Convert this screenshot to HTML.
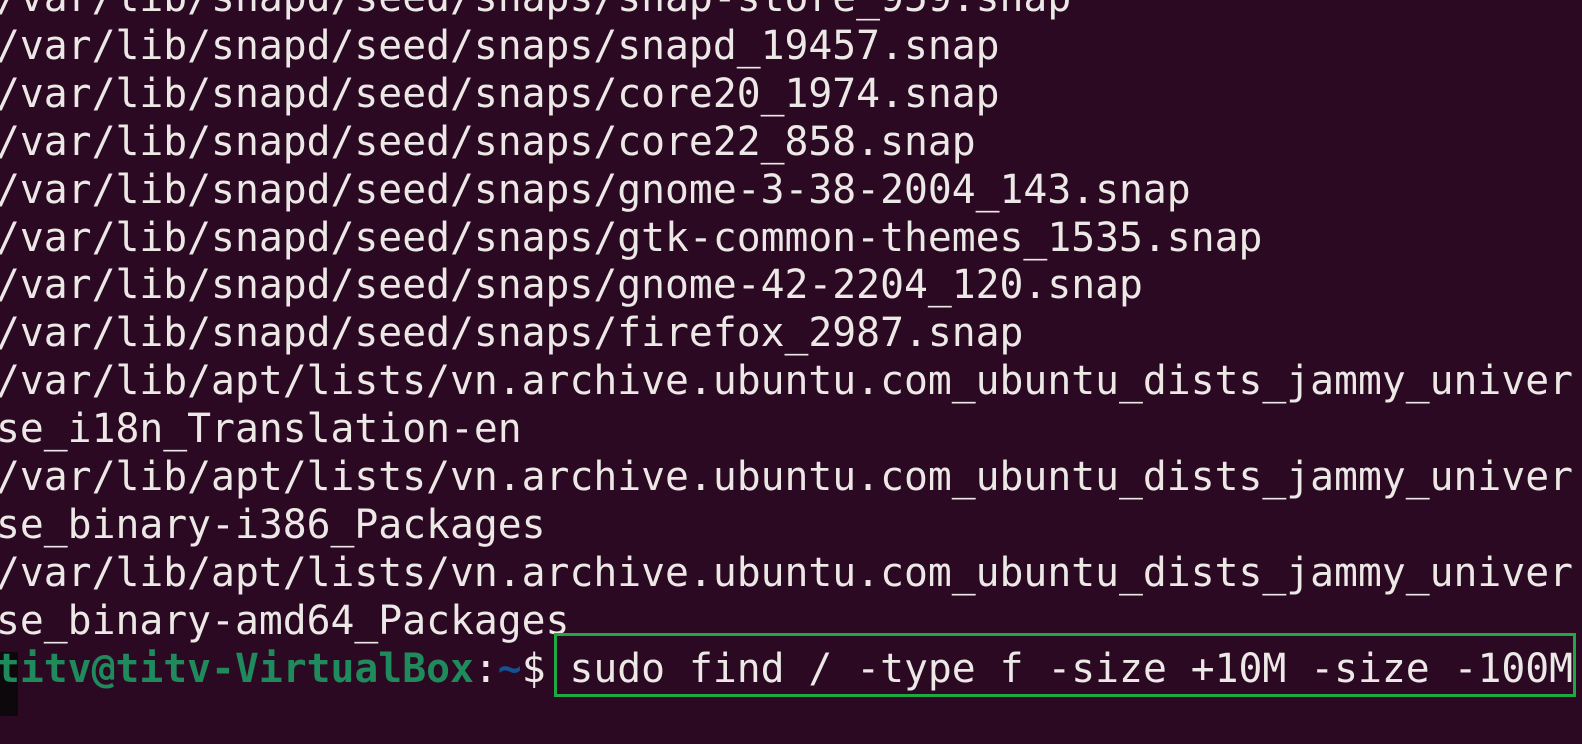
<!DOCTYPE html>
<html><head><meta charset="utf-8"><style>
html,body{margin:0;padding:0;width:1582px;height:744px;overflow:hidden;background:#2c0922;}
pre{position:absolute;left:-4px;top:-25px;margin:0;font-family:"DejaVu Sans Mono","Liberation Mono",monospace;font-size:39.7px;line-height:47.9px;color:#ebe8e6;white-space:pre;}
.g{color:#1f8a5c;font-weight:bold}
.b{color:#15508f;font-weight:bold}
.box{position:absolute;left:554px;top:633px;width:1016px;height:58px;border:3px solid #20a845;}
.cur{position:absolute;left:0;top:652px;width:18px;height:64px;background:#0d080c;border-radius:2px;}
</style></head><body>
<div class="cur"></div>
<pre>/var/lib/snapd/seed/snaps/snap-store_959.snap
/var/lib/snapd/seed/snaps/snapd_19457.snap
/var/lib/snapd/seed/snaps/core20_1974.snap
/var/lib/snapd/seed/snaps/core22_858.snap
/var/lib/snapd/seed/snaps/gnome-3-38-2004_143.snap
/var/lib/snapd/seed/snaps/gtk-common-themes_1535.snap
/var/lib/snapd/seed/snaps/gnome-42-2204_120.snap
/var/lib/snapd/seed/snaps/firefox_2987.snap
/var/lib/apt/lists/vn.archive.ubuntu.com_ubuntu_dists_jammy_univer
se_i18n_Translation-en
/var/lib/apt/lists/vn.archive.ubuntu.com_ubuntu_dists_jammy_univer
se_binary-i386_Packages
/var/lib/apt/lists/vn.archive.ubuntu.com_ubuntu_dists_jammy_univer
se_binary-amd64_Packages
<span class="g">titv@titv-VirtualBox</span>:<span class="b">~</span>$ sudo find / -type f -size +10M -size -100M</pre>
<div class="box"></div>
</body></html>
